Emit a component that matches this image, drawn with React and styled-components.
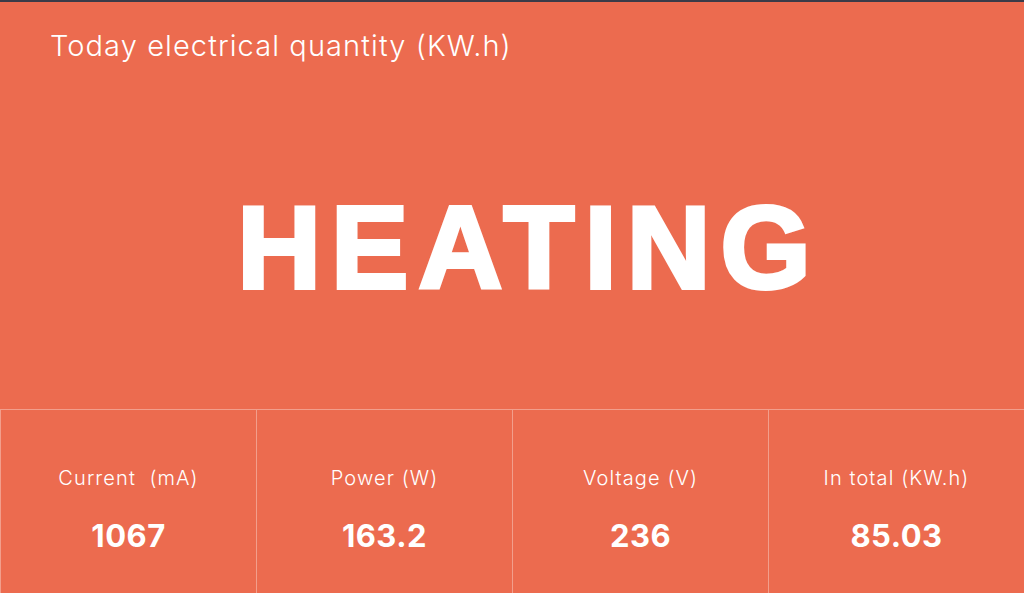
import React from 'react';
import styled, { createGlobalStyle } from 'styled-components';

const GlobalStyle = createGlobalStyle`
    html, body {
        margin: 0;
        padding: 0;
        background: #ec6b4f;
    }
    * { box-sizing: border-box; }
`

const stats = [
    { label: 'Current\u00a0\u00a0(mA)', value: '1067' },
    { label: 'Power (W)', value: '163.2' },
    { label: 'Voltage (V)', value: '236' },
    { label: 'In total (KW.h)', value: '85.03' },
]

const App = () => {
    return (
        <Screen>
            <GlobalStyle />
            <Title>Today electrical quantity (KW.h)</Title>
            <Status>
                <Big>HEATING</Big>
            </Status>
            <StatsRow>
                {stats.map(s => (
                    <Cell key={s.value}>
                        <Label>{s.label}</Label>
                        <Value>{s.value}</Value>
                    </Cell>
                ))}
            </StatsRow>
        </Screen>
    )
}

const Screen = styled.div`
    width: 1024px;
    height: 593px;
    background: #ec6b4f;
    border-top: 2px solid #3b3b48;
    display: flex;
    flex-direction: column;
    font-family: "Inter", "Liberation Sans", sans-serif;
    color: #fff;
    overflow: hidden;
`

const Title = styled.h1`
    margin: 0;
    padding: 27px 0 0 50px;
    font-size: 29px;
    font-weight: 300;
    line-height: 34px;
    letter-spacing: 1.1px;
`

const Status = styled.div`
    flex: 1;
    display: flex;
    align-items: center;
    justify-content: center;
    padding-top: 24px;
`

const Big = styled.div`
    font-family: "Liberation Sans", Arial, sans-serif;
    font-weight: 700;
    font-size: 116px;
    line-height: 1;
    letter-spacing: 10px;
    -webkit-text-stroke: 4px #fff;
    padding-left: 34px;
`

const StatsRow = styled.div`
    height: 184px;
    display: grid;
    grid-template-columns: repeat(4, 1fr);
    border-top: 1px solid rgba(255, 255, 255, 0.35);
`

const Cell = styled.div`
    border-left: 1px solid rgba(255, 255, 255, 0.35);
    display: flex;
    flex-direction: column;
    align-items: center;
    padding-top: 56px;
`

const Label = styled.div`
    font-size: 20px;
    font-weight: 300;
    letter-spacing: 1.1px;
    line-height: 24px;
`

const Value = styled.div`
    margin-top: 28px;
    font-size: 31px;
    font-weight: 700;
    line-height: 36px;
    letter-spacing: 0.5px;
`

export default App
